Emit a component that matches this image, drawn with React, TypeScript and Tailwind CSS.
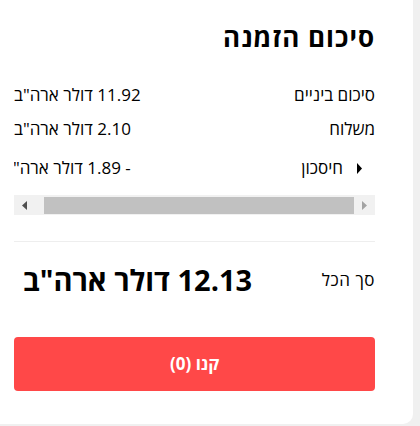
import React from "react";

const font = { fontFamily: '"Open Sans", "Noto Sans", "DejaVu Sans", sans-serif' };

function SummaryRow({label, value}: {label: string; value: string}) {
	return (
		<div className="flex justify-between items-center h-[24px] text-[17px] leading-[24px] text-black">
			<span>{label}</span>
			<span>{value}</span>
		</div>
	);
}

function FakeScrollbar() {
	return (
		<div dir="ltr" className="relative h-[20px] bg-[#f1f1f1] flex items-center">
			<div className="w-[30px] h-full flex items-center pl-[8px]">
				<svg width="5" height="9" viewBox="0 0 5 9"><polygon points="5,0 0,4.5 5,9" fill="#505050"/></svg>
			</div>
			<div className="w-[310px] h-[17px] bg-[#c1c1c1]"/>
			<div className="flex-1 h-full flex items-center pl-[8px]">
				<svg width="5" height="9" viewBox="0 0 5 9"><polygon points="0,0 5,4.5 0,9" fill="#a3a3a3"/></svg>
			</div>
		</div>
	);
}

export default function App() {
	return (
		<div className="w-[420px] h-[426px] bg-[#f0f0f0]" style={font}>
			<div dir="rtl" className="w-[413px] h-[424px] bg-white rounded-br-[10px] pl-[14px] pr-[38px] pt-[21px]">

				{/* Title */}
				<h2 className="text-[26px] leading-[32px] font-bold tracking-[1px] text-black">סיכום הזמנה</h2>

				{/* Lines */}
				<div className="mt-[30px]">
					<SummaryRow label="סיכום ביניים" value="11.92 דולר ארה&quot;ב"/>
					<div className="mt-[10px]">
						<SummaryRow label="משלוח" value="2.10 דולר ארה&quot;ב"/>
					</div>
					<div className="mt-[15px] overflow-hidden">
						<div className="w-[calc(100%+10px)] flex justify-between items-center h-[24px] text-[17px] leading-[24px] text-black">
							<div className="flex items-center">
								<span className="w-[13px]"/>
								<svg width="5" height="11" viewBox="0 0 5 11"><polygon points="0,0 5,5.5 0,11" fill="#000"/></svg>
								<span className="mr-[14px]">חיסכון</span>
							</div>
							<span>- 1.89 דולר ארה"ב</span>
						</div>
					</div>
					<div className="mt-[15px]">
						<FakeScrollbar/>
					</div>
				</div>

				<div className="mt-[26px] border-t border-[#eeeeee]"/>

				{/* Total */}
				<div className="mt-[18px] flex justify-between items-center h-[40px]">
					<span className="text-[17px] leading-[24px] tracking-[0.5px] text-black">סך הכל</span>
					<span className="text-[29px] leading-[40px] font-bold text-black pl-[9px]">12.13 דולר ארה"ב</span>
				</div>

				<button className="mt-[37px] w-full h-[54px] rounded-[4px] bg-[#ff4848] text-white font-bold text-[17px] flex items-center justify-center">
					קנו (0)
				</button>
			</div>
		</div>
	);
}
